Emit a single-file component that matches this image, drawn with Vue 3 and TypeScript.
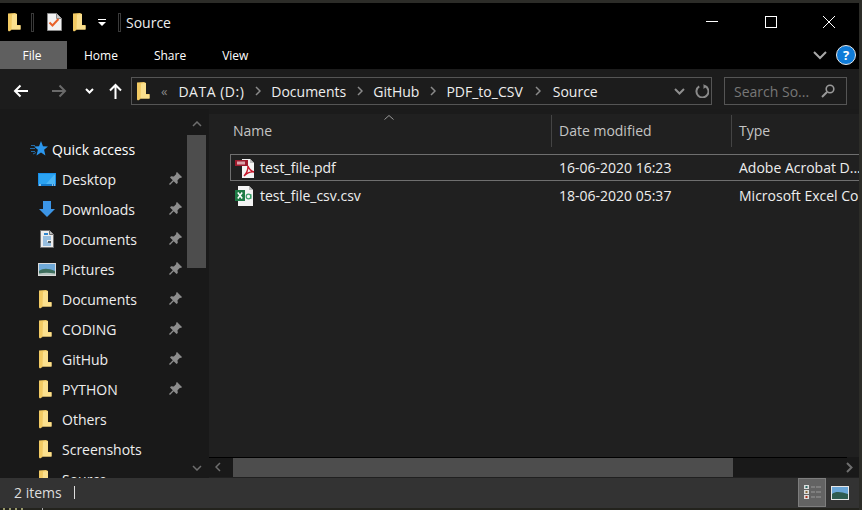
<script setup lang="ts">
const nav = [
  { label: 'Desktop', icon: 'desktop', pin: true },
  { label: 'Downloads', icon: 'down', pin: true },
  { label: 'Documents', icon: 'docs', pin: true },
  { label: 'Pictures', icon: 'pics', pin: true },
  { label: 'Documents', icon: 'folder', pin: true },
  { label: 'CODING', icon: 'folder', pin: true },
  { label: 'GitHub', icon: 'folder', pin: true },
  { label: 'PYTHON', icon: 'folder', pin: true },
  { label: 'Others', icon: 'folder', pin: false },
  { label: 'Screenshots', icon: 'folder', pin: false },
  { label: 'Source', icon: 'folder', pin: false },
]
const crumbs = ['Documents', 'GitHub', 'PDF_to_CSV', 'Source']
const folderBack = 'M0 .5 7 0l2 1v11h3.500v4.500H3.500V17l-2.500 1.500-1-1z'
const folderFront = 'M4 1.500 9 1v11.500h3.500v4H3.500z'
</script>

<template>
  <div class="win">
    <div class="titlebar">
      <svg class="qa q1" width="13" height="19" viewBox="0 0 13 19"><path :d="folderBack" fill="#f2ca63"/><path :d="folderFront" fill="#fbe08e"/></svg>
      <span class="sep s1"></span>
      <svg class="qa q2" width="15" height="18" viewBox="0 0 15 18"><path d="M.5.500h9l5 5v12H.5z" fill="#f2f2f2" stroke="#8a8a8a"/><path d="M9.500.500v5h5" fill="#c8c8c8" stroke="#8a8a8a"/><path d="M2.500 9.500l3 3 6-6.500" fill="none" stroke="#e8622a" stroke-width="2"/></svg>
      <svg class="qa q3" width="13" height="19" viewBox="0 0 13 19"><path :d="folderBack" fill="#f2ca63"/><path :d="folderFront" fill="#fbe08e"/></svg>
      <svg class="qa q4" width="8" height="7" viewBox="0 0 8 7"><path d="M0 0h8v1H0zM0 3h8L4 7z" fill="#fff"/></svg>
      <span class="sep s2"></span>
      <span class="wintitle">Source</span>
      <div class="caption">
        <svg width="12" height="12" viewBox="0 0 12 12"><path d="M0 5.500h12" stroke="#fff"/></svg>
        <svg width="12" height="12" viewBox="0 0 12 12"><rect x=".5" y=".5" width="11" height="11" fill="none" stroke="#fff"/></svg>
        <svg width="12" height="12" viewBox="0 0 12 12"><path d="M0 0l12 12M12 0L0 12" stroke="#fff"/></svg>
      </div>
    </div>
    <div class="ribbon">
      <div class="tab file">File</div>
      <div class="tab home">Home</div>
      <div class="tab share">Share</div>
      <div class="tab view">View</div>
      <svg class="chev" width="14" height="9" viewBox="0 0 14 9"><path d="M1 1l6 6 6-6" fill="none" stroke="#a8a8a8" stroke-width="2"/></svg>
      <div class="help">?</div>
    </div>
    <div class="navbar">
      <svg class="back" width="15" height="14" viewBox="0 0 15 14"><path d="M15 7H2M7.500 1.500L2 7l5.500 5.500" fill="none" stroke="#fff" stroke-width="2"/></svg>
      <svg class="fwd" width="15" height="14" viewBox="0 0 15 14"><path d="M0 7h13M7.500 1.500L13 7l-5.500 5.500" fill="none" stroke="#6a6a6a" stroke-width="2"/></svg>
      <svg class="drop" width="9" height="6" viewBox="0 0 9 6"><path d="M1 1l3.500 3.500L8 1" fill="none" stroke="#fff" stroke-width="2"/></svg>
      <svg class="up" width="13" height="16" viewBox="0 0 13 16"><path d="M6.500 16V2M1 7.500L6.500 2 12 7.500" fill="none" stroke="#fff" stroke-width="2"/></svg>
      <div class="addr">
        <svg class="addr-folder" width="13" height="19" viewBox="0 0 13 19"><path :d="folderBack" fill="#f2ca63"/><path :d="folderFront" fill="#fbe08e"/></svg>
        <span class="more">«</span>
        <span class="crumb first">DATA (D:)</span>
        <template v-for="(c, i) in crumbs" :key="c">
          <svg class="gt" :class="{ wide: i === 3 }" width="6" height="10" viewBox="0 0 6 10"><path d="M1 1l4 4-4 4" fill="none" stroke="#8a8a8a" stroke-width="1.500"/></svg>
          <span class="crumb">{{ c }}</span>
        </template>
        <span class="spacer"></span>
        <svg class="addr-drop" width="11" height="7" viewBox="0 0 11 7"><path d="M1 1l4.500 4.500L10 1" fill="none" stroke="#8f8f8f" stroke-width="2"/></svg>
        <svg class="refresh" width="14" height="14" viewBox="0 0 14 14"><path d="M4.200 2.400A6 6 0 1 0 10 2" fill="none" stroke="#8a8a8a" stroke-width="2"/><path d="M8.500 0v5l3-2.500z" fill="#8a8a8a"/></svg>
      </div>
      <div class="search">
        <span>Search So...</span>
        <svg width="14" height="14" viewBox="0 0 14 14"><circle cx="9" cy="5" r="3.800" fill="none" stroke="#9a9a9a" stroke-width="1.600"/><path d="M6 8l-5 5" stroke="#9a9a9a" stroke-width="2"/></svg>
      </div>
    </div>

    <div class="main">
      <aside class="side">
        <div class="tree">
          <div class="row quick">
            <svg width="18" height="16" viewBox="0 0 18 16"><path d="M11 0l2 5.200 5 .3-3.900 3.300 1.300 5.700L11 11.400l-4.500 3.100 1.400-5.700L4 5.500l5-.3z" fill="#2b97ee"/><path d="M1 4.500h4M0 7.500h5M1 10.500h4M3 13l3-1.500" stroke="#2b97ee" stroke-opacity=".65"/></svg>
            <span>Quick access</span>
          </div>
          <div v-for="(n, i) in nav" :key="i" class="row item">
            <span class="ico">
              <svg v-if="n.icon === 'desktop'" width="18" height="13" viewBox="0 0 18 13"><rect width="18" height="13" fill="#1a8fe8"/><path d="M1 1h16v10H1z" fill="#2ba3f2"/><path d="M8 11l8-9h1v9z" fill="#4cb6f6"/><path d="M0 12h18" stroke="#0d62ad"/><path d="M1 12h2M14 12h1M16 12h1" stroke="#fff"/></svg>
              <svg v-else-if="n.icon === 'down'" class="ico-down" width="16" height="16" viewBox="0 0 16 16"><path d="M4 0h8v8h4l-8 8-8-8h4z" fill="#3c95e6"/></svg>
              <svg v-else-if="n.icon === 'docs'" class="ico-docs" width="14" height="18" viewBox="0 0 14 18"><path d="M.5.500h9l4 4v13H.5z" fill="#ededed" stroke="#6f6f6f"/><path d="M9.500.500v4h4" fill="#bbb" stroke="#6f6f6f"/><path d="M3 7h8M3 9h8M3 11h4M3 13h8M3 15h8" stroke="#2f86d0" stroke-width=".9"/><path d="M8 11h3v2H8z" fill="#4d5a5f"/><path d="M4 3h4v2H4z" fill="#2f86d0"/></svg>
              <svg v-else-if="n.icon === 'pics'" width="18" height="13" viewBox="0 0 18 13"><rect width="18" height="13" fill="#d9d9d9"/><rect x="1" y="1" width="16" height="11" fill="#6fa9d8"/><path d="M1 8c4-3 9-3 16 0v4H1z" fill="#3f6f5e"/><path d="M1 10.500c5-1 10-1 16 0V12H1z" fill="#b9c9c4"/></svg>
              <svg v-else class="ico-folder" width="13" height="19" viewBox="0 0 13 19"><path :d="folderBack" fill="#f2ca63"/><path :d="folderFront" fill="#fbe08e"/></svg>
            </span>
            <span class="label">{{ n.label }}</span>
            <svg v-if="n.pin" class="pin" width="13" height="13" viewBox="0 0 13 13"><path d="M8 0l5 5-1 1-1-.3L8.500 8.200 8.800 11 7.500 12 4.700 9.200 1 13 0 12l3.800-3.700L1 5.500 2 4.200l2.800.3L7.300 2 7 1z" fill="#8c8c8c"/></svg>
          </div>
        </div>
        <div class="vscroll">
          <svg width="10" height="6" viewBox="0 0 10 6"><path d="M1 5l4-4 4 4" fill="none" stroke="#6e6e6e" stroke-width="1.500"/></svg>
          <div class="vthumb"></div>
          <span class="grow"></span>
          <svg width="10" height="6" viewBox="0 0 10 6"><path d="M1 1l4 4 4-4" fill="none" stroke="#6e6e6e" stroke-width="1.500"/></svg>
        </div>
      </aside>
      <section class="content">
        <div class="cols">
          <svg class="sort" width="10" height="5" viewBox="0 0 10 5"><path d="M.5 4.500L5 .5l4.500 4" fill="none" stroke="#9a9a9a"/></svg>
          <div class="col c1">Name</div>
          <div class="col c2">Date modified</div>
          <div class="col c3">Type</div>
        </div>
        <div class="files">
          <div class="file-row selected">
            <svg class="fi" width="20" height="20" viewBox="0 0 20 20"><path d="M7 1h8l4 4v15H7z" fill="#f4f4f4"/><path d="M15 1v4h4z" fill="#bdbdbd"/><rect y="2" width="13" height="6" fill="#9e1a2c"/><path d="M9 18c3-3 4-7 4-10 1 3 3 5 6 6-4-.5-7 1-10 4z" fill="none" stroke="#c8182c" stroke-width="1.400"/><path d="M2 3.500h8v3H2z" fill="#d9a3aa"/></svg>
            <span class="n">test_file.pdf</span>
            <span class="d">16-06-2020 16:23</span>
            <span class="t">Adobe Acrobat D...</span>
          </div>
          <div class="file-row">
            <svg class="fi fx" width="20" height="20" viewBox="0 0 20 20"><path d="M3 0h11l4 4v16H3z" fill="#f4f4f4"/><path d="M14 0v4h4z" fill="#bdbdbd"/><rect y="4" width="10" height="11" fill="#1e7a45"/><path d="M2.800 6.500l4.400 6M7.200 6.500l-4.400 6" stroke="#fff" stroke-width="1.500"/><circle cx="13.500" cy="10.500" r="2.300" fill="none" stroke="#3aa06a" stroke-width="1.200"/><path d="M15.800 8v5" stroke="#3aa06a" stroke-width="1.200"/></svg>
            <span class="n">test_file_csv.csv</span>
            <span class="d">18-06-2020 05:37</span>
            <span class="t">Microsoft Excel Co</span>
          </div>
        </div>
        <span class="grow"></span>
        <div class="hscroll">
          <svg width="6" height="10" viewBox="0 0 6 10"><path d="M5 1L1 5l4 4" fill="none" stroke="#6e6e6e" stroke-width="1.500"/></svg>
          <div class="hthumb"></div>
          <span class="grow"></span>
          <svg width="7" height="11" viewBox="0 0 7 11"><path d="M1 1l4.500 4.500L1 10" fill="none" stroke="#6e6e6e" stroke-width="2"/></svg>
        </div>
      </section>
    </div>

    <div class="status">
      <span>2 items</span>
      <span class="caret"></span>
      <span class="grow"></span>
      <div class="view-a">
        <svg width="17" height="15" viewBox="0 0 17 15"><rect width="5" height="4" fill="#dcdcdc"/><rect y="5" width="5" height="4" fill="#dcdcdc"/><rect y="10" width="5" height="4" fill="#dcdcdc"/><rect x="1.500" y="1" width="2" height="2" fill="#2b6d6a"/><rect x="1.500" y="6" width="2" height="2" fill="#8a6b3a"/><rect x="1.500" y="11" width="2" height="2" fill="#b0321d"/><path d="M7 2h4M12 2h5M7 7h4M12 7h5M7 12h4M12 12h5" stroke="#9a9a9a"/></svg>
      </div>
      <svg class="view-b" width="18" height="14" viewBox="0 0 18 14"><rect width="18" height="14" fill="#e8e8e8"/><rect x="1" y="1" width="16" height="12" fill="#6ba7d8"/><path d="M1 8c4-3 9-2 16 0v5H1z" fill="#2f5c50"/></svg>
    </div>
    <div class="bottom">
      <svg width="50" height="2" viewBox="0 0 50 2"><path d="M3 0h2v2H3zM9 0h2v2H9zM15 0h2v2h-2zM21 0h2v2h-2z" fill="#9a9a6a"/><path d="M42 0h1v2h-1z" fill="#aaa"/></svg>
    </div>
  </div>
</template>

<style>
html, body { margin: 0; background: #1b1b1b; overflow: hidden; }
</style>

<style scoped>
.win {
  width: 862px; height: 510px; box-sizing: border-box;
  display: flex; flex-direction: column; overflow: hidden;
  border-top: 3px solid #2c2c28; border-right: 3px solid #2c2c28;
  background: #191919; color: #fff;
  font-family: "Open Sans", "Noto Sans", sans-serif; font-size: 14px;
}
.grow { flex: 1; }
.titlebar { height: 38px; flex: none; background: #000; display: flex; align-items: center; }
.qa { flex: none; }
.q1 { margin-left: 8px; }
.sep { width: 1px; height: 17px; border: 1px solid #3a3a3a; background: #000; flex: none; }
.s1 { margin-left: 10px; }
.q2 { margin-left: 13px; }
.q3 { margin-left: 11px; }
.q4 { margin-left: 12px; }
.s2 { margin-left: 12px; }
.wintitle { margin-left: 5px; font-size: 14px; color: #eee; }
.caption { margin-left: auto; display: flex; gap: 46.500px; margin-right: 24px; }
.ribbon { height: 28px; flex: none; background: #000; display: flex; align-items: center; font-size: 12px; }
.tab { height: 28px; line-height: 30px; text-align: center; }
.file { width: 64px; background: #5f5f5f; padding-right: 3px; }
.home { margin-left: 17px; }
.share { margin-left: 36px; }
.view { margin-left: 36px; }
.chev { margin-left: auto; margin-right: 9px; }
.help { width: 20px; height: 20px; box-sizing: border-box; border-radius: 50%; background: #0f7bd8; border: 1px solid #e6e6e6; font-size: 13px; font-weight: 700; line-height: 18px; text-align: center; margin-right: 3px; }
.navbar { height: 40px; flex: none; box-sizing: border-box; padding-top: 4px; background: #1c1c1c; display: flex; align-items: center; }
.back { margin-left: 13px; }
.fwd { margin-left: 24px; }
.drop { margin-left: 18px; }
.up { margin-left: 15px; }
.addr { margin-left: 9px; width: 581px; height: 28px; box-sizing: border-box; border: 1px solid #555; display: flex; align-items: center; font-size: 14px; color: #eee; }
.addr-folder { margin-left: 5px; }
.more { color: #888; margin-left: 11px; font-size: 13px; }
.crumb.first { margin-left: 11px; letter-spacing: .5px; }
.gt { margin: 0 10px 0 11px; }
.gt.wide { margin: 0 12px 0 12px; }
.spacer { flex: 1; }
.addr-drop { margin-right: 2px; }
.refresh { margin-right: 2px; margin-left: 8px; }
.search { margin-left: 12px; width: 123px; height: 28px; box-sizing: border-box; border: 1px solid #555; display: flex; align-items: center; justify-content: space-between; padding: 0 11px 0 9px; color: #777; font-size: 14px; }
.main { height: 369px; flex: none; display: flex; }
.side { width: 208px; flex: none; display: flex; background: #191919; overflow: hidden; }
.tree { width: 187px; flex: none; padding-top: 25px; box-sizing: border-box; }
.row { height: 30px; display: flex; align-items: center; white-space: nowrap; }
.quick { padding-left: 30px; gap: 4px; }
.item { position: relative; }
.ico { width: 24px; margin-left: 38px; display: flex; justify-content: flex-start; flex: none; }
.ico-down { margin-left: 1px; }
.ico-docs { margin-left: 2px; }
.ico-folder { margin-left: 1px; }
.label { color: #eee; }
.pin { position: absolute; right: 5px; top: 8px; }
.vscroll { width: 19px; flex: none; display: flex; flex-direction: column; align-items: center; padding: 12px 0 7px; box-sizing: border-box; }
.vthumb { width: 19px; height: 133px; background: #4d4d4d; margin-top: 8px; }
.content { flex: 1; min-width: 0; background: #202020; border-top: 5px solid #1b1b1b; display: flex; flex-direction: column; margin-left: 1px; }
.cols { height: 40px; flex: none; display: flex; align-items: flex-start; padding-top: 1px; box-sizing: border-box; position: relative; color: #c4c4c4; }
.sort { position: absolute; left: 175px; top: 1px; }
.col { box-sizing: border-box; height: 32px; line-height: 32px; padding-left: 7px; }
.c1 { width: 343px; padding-left: 24px; border-right: 1px solid #444; }
.c2 { width: 180px; border-right: 1px solid #444; }
.c3 { flex: 1; }
.files { padding-left: 21px; display: flex; flex-direction: column; gap: 1px; }
.file-row { height: 27px; width: 640px; box-sizing: border-box; display: flex; align-items: center; white-space: nowrap; border: 1px solid transparent; color: #eee; overflow: hidden; }
.selected { border-color: #6f6f6f; }
.fi { margin-left: 4px; flex: none; }
.n { width: 299px; margin-left: 5px; flex: none; }
.d { width: 180px; flex: none; }
.hscroll { height: 20px; flex: none; margin-bottom: 1px; background: #191919; display: flex; align-items: center; padding: 0 6px; position: relative; }
.hscroll::before { content: ""; position: absolute; left: 0; right: 12px; top: 0; height: 1px; background: #000; }
.hthumb { width: 500px; height: 19px; margin-top: 1px; background: #4d4d4d; margin-left: 12px; }
.status { height: 30px; flex: none; box-sizing: border-box; background: #333; display: flex; align-items: center; color: #ddd; padding: 0 0 1px 14px; }
.caret { width: 1px; height: 13px; background: #ddd; margin-left: 12px; }
.view-a { width: 28px; height: 29px; background: #636363; border: 1px solid #7e7e7e; box-sizing: border-box; display: flex; align-items: center; justify-content: center; }
.view-b { margin-left: 5px; margin-right: 10px; }
.bottom { height: 2px; flex: none; background: #23231d; display: flex; }
</style>
